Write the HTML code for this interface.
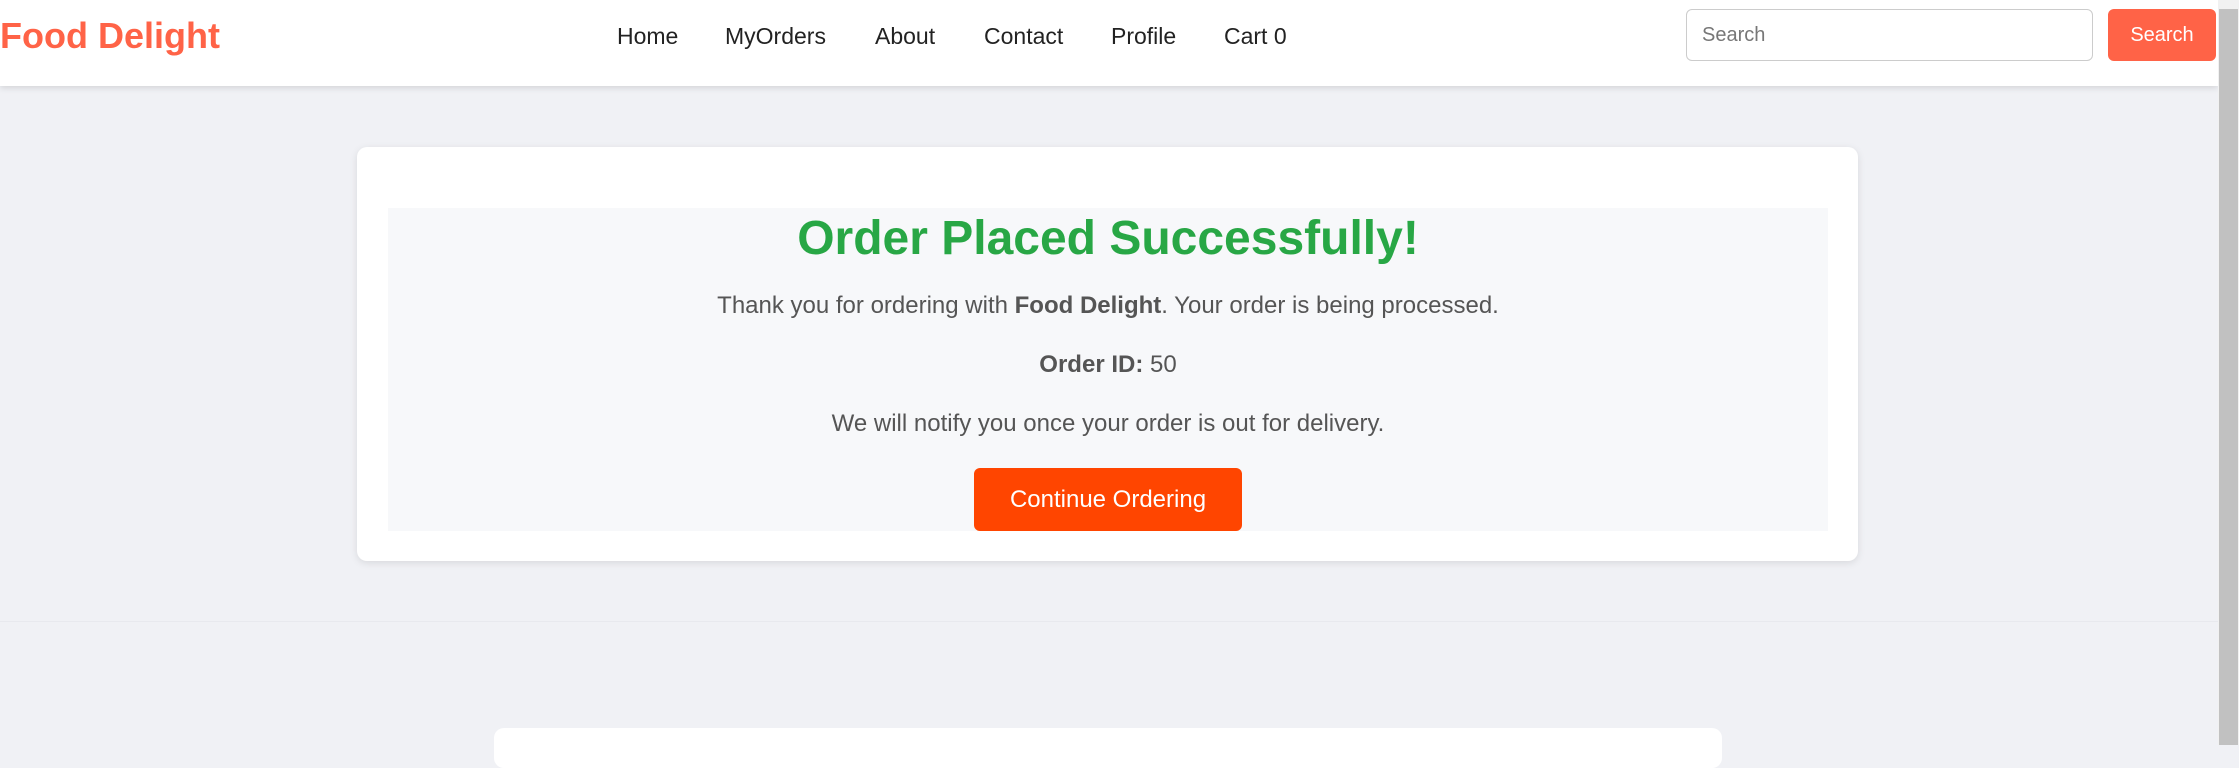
<!DOCTYPE html>
<html><head><style>
*{box-sizing:border-box;margin:0;padding:0}
body{width:2239px;height:745px;overflow:hidden;background:#f0f1f5;font-family:"Liberation Sans",Arial,sans-serif;position:relative}
.nav{position:absolute;left:0;top:0;width:2218px;height:86px;background:#fff;box-shadow:0 2px 6px rgba(0,0,0,.12)}
.logo{position:absolute;left:0;top:15px;font-size:36px;font-weight:bold;color:#ff6347}
.links a{position:absolute;top:23px;font-size:23px;color:#222;text-decoration:none}
.inp{position:absolute;left:1686px;top:9px;width:407px;height:52px;border:1px solid #ccc;border-radius:6px;font-size:20px;color:#777;padding:14px 15px}
.sbtn{position:absolute;left:2108px;top:9px;width:108px;height:52px;background:#ff6347;border-radius:6px;color:#fff;font-size:20px;text-align:center;line-height:52px}
.sb{position:absolute;left:2218px;top:0;width:21px;height:745px;background:#f1f1f1}
.sb div{position:absolute;left:1px;top:9px;width:19px;height:736px;background:#c1c1c1}
.card{position:absolute;left:357px;top:147px;width:1501px;height:414px;background:#fff;border-radius:10px;box-shadow:0 2px 8px rgba(0,0,0,.1)}
.inner{position:absolute;left:31px;top:61px;width:1440px;height:323px;background:#f7f8fa;text-align:center;color:#555;font-size:24px}
h1{position:absolute;left:0;right:0;top:3px;font-size:48px;color:#28a745}
.p{position:absolute;left:0;right:0}
.btn{position:absolute;left:586px;top:260px;width:268px;height:63px;background:#ff4500;border-radius:6px;color:#fff;font-size:24px;line-height:63px}
.line{position:absolute;left:0;top:621px;width:2218px;height:1px;background:#e8e9ee}
.card2{position:absolute;left:494px;top:728px;width:1228px;height:40px;background:#fff;border-radius:10px}
</style></head><body>
<div class="nav">
<div class="logo">Food Delight</div>
<div class="links"><a style="left:617px">Home</a><a style="left:725px">MyOrders</a><a style="left:875px">About</a><a style="left:984px">Contact</a><a style="left:1111px">Profile</a><a style="left:1224px">Cart 0</a></div>
<div class="inp">Search</div>
<div class="sbtn">Search</div>
</div>
<div class="sb"><div></div></div>
<div class="card"><div class="inner">
<h1>Order Placed Successfully!</h1>
<div class="p" style="top:84px">Thank you for ordering with <b>Food Delight</b>. Your order is being processed.</div>
<div class="p" style="top:143px"><b>Order ID:</b> 50</div>
<div class="p" style="top:202px">We will notify you once your order is out for delivery.</div>
<div class="btn">Continue Ordering</div>
</div></div>
<div class="line"></div>
<div class="card2"></div>
</body></html>
